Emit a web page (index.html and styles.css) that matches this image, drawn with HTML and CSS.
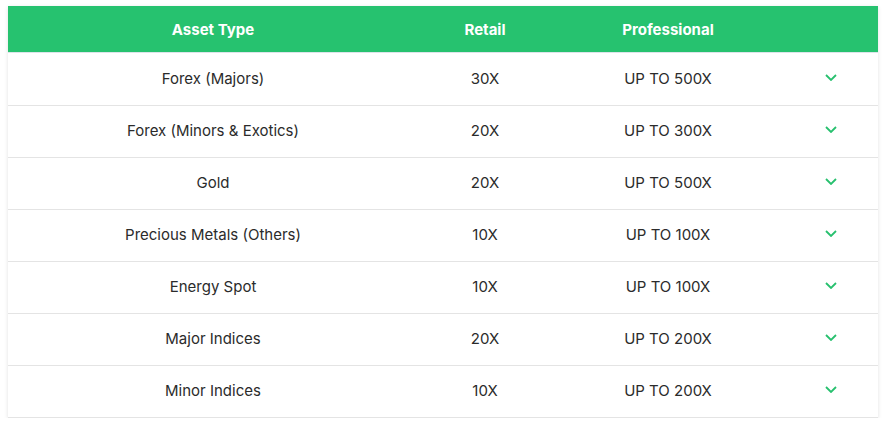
FILE: index.html
```html
<!DOCTYPE html>
<html>
<head>
<meta charset="utf-8">
<link rel="stylesheet" href="styles.css">
</head>
<body>
<div class="wrap">
<table class="lev">
  <colgroup>
    <col class="c1"><col class="c2"><col class="c3"><col class="c4">
  </colgroup>
  <thead>
    <tr><th>Asset Type</th><th>Retail</th><th>Professional</th><th></th></tr>
  </thead>
  <tbody>
    <tr><td>Forex (Majors)</td><td>30X</td><td>UP TO 500X</td><td><svg class="chev" viewBox="0 0 12 7"><path d="M1 1l5 5 5-5"/></svg></td></tr>
    <tr><td>Forex (Minors &amp; Exotics)</td><td>20X</td><td>UP TO 300X</td><td><svg class="chev" viewBox="0 0 12 7"><path d="M1 1l5 5 5-5"/></svg></td></tr>
    <tr><td>Gold</td><td>20X</td><td>UP TO 500X</td><td><svg class="chev" viewBox="0 0 12 7"><path d="M1 1l5 5 5-5"/></svg></td></tr>
    <tr><td>Precious Metals (Others)</td><td>10X</td><td>UP TO 100X</td><td><svg class="chev" viewBox="0 0 12 7"><path d="M1 1l5 5 5-5"/></svg></td></tr>
    <tr><td>Energy Spot</td><td>10X</td><td>UP TO 100X</td><td><svg class="chev" viewBox="0 0 12 7"><path d="M1 1l5 5 5-5"/></svg></td></tr>
    <tr><td>Major Indices</td><td>20X</td><td>UP TO 200X</td><td><svg class="chev" viewBox="0 0 12 7"><path d="M1 1l5 5 5-5"/></svg></td></tr>
    <tr><td>Minor Indices</td><td>10X</td><td>UP TO 200X</td><td><svg class="chev" viewBox="0 0 12 7"><path d="M1 1l5 5 5-5"/></svg></td></tr>
  </tbody>
</table>
</div>
</body>
</html>
```
FILE: styles.css
```css
html, body { margin: 0; padding: 0; background: #fff; }
body { font-family: "Inter", "Open Sans", sans-serif; }
.wrap { padding: 6px 11px 0 8px; }
.lev {
  width: 870px;
  border-collapse: collapse;
  table-layout: fixed;
  box-shadow: 0 1px 4px rgba(0,0,0,0.12);
}
.c1 { width: 410px; }
.c2 { width: 134px; }
.c3 { width: 232px; }
.c4 { width: 94px; }
.lev thead tr { background: #26c26f; }
.lev th {
  height: 46px;
  padding: 0;
  color: #fff;
  font-weight: 700;
  font-size: 15px;
  text-align: center;
  border-bottom: 1px solid #dde3ea;
}
.lev td {
  height: 49px;
  padding: 0 0 2px;
  text-align: center;
  font-size: 15px;
  color: #2b2b2b;
  border-bottom: 1px solid #e4e4e4;
}
.lev tbody tr:first-child td { height: 50px; }
.chev {
  display: block;
  margin: -2px auto 0;
  width: 12px;
  height: 7px;
  fill: none;
  stroke: #27c06e;
  stroke-width: 1.8;
}
```
